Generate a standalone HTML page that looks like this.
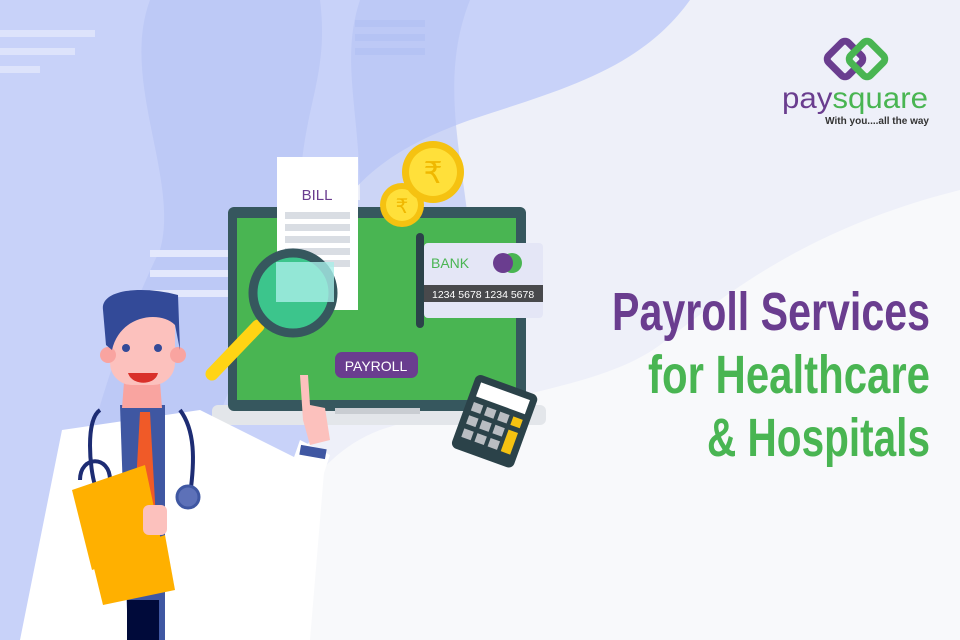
<!DOCTYPE html><html><head><style>body{margin:0}svg{display:block}</style></head><body>
<svg width="960" height="640" viewBox="0 0 960 640" xmlns="http://www.w3.org/2000/svg" font-family="Liberation Sans, sans-serif">
<rect width="960" height="640" fill="#eef0f9"/>
<path d="M960,190 C800,230 720,300 660,345 C600,390 470,400 380,430 C300,460 260,560 250,640 L960,640 Z" fill="#f8f9fb"/>
<path d="M690,0 C640,70 560,90 470,120 C400,145 370,170 345,200 L345,380 C330,440 250,480 200,640 L0,640 L0,0 Z" fill="#c8d2f9"/>
<path d="M150,0 L320,0 C330,80 300,110 300,200 L360,200 C360,110 340,60 360,0 L470,0 C430,100 480,200 470,300 L300,300 C250,330 200,400 180,640 L60,640 C60,500 120,330 160,250 C180,180 120,80 150,0Z" fill="#b5c3f4" opacity=".6"/>
<rect x="0" y="30" width="95" height="7" fill="#dde3fb"/><rect x="0" y="48" width="75" height="7" fill="#dde3fb"/><rect x="0" y="66" width="40" height="7" fill="#dde3fb"/>
<rect x="355" y="20" width="70" height="7" fill="#b5c3f4"/><rect x="355" y="34" width="70" height="7" fill="#b5c3f4"/><rect x="355" y="48" width="70" height="7" fill="#b5c3f4"/>
<rect x="150" y="250" width="100" height="7" fill="#e3e8fc"/><rect x="150" y="270" width="100" height="7" fill="#e3e8fc"/><rect x="150" y="290" width="90" height="7" fill="#e3e8fc"/>
<!-- laptop -->
<rect x="212" y="405" width="334" height="20" rx="6" fill="#e3e6ea"/>
<rect x="228" y="207" width="298" height="204" rx="6" fill="#36575e"/>
<rect x="237" y="218" width="279" height="182" fill="#49b552"/>
<rect x="335" y="408" width="85" height="6" fill="#c9cdd2"/>
<rect x="416" y="233" width="8" height="95" rx="4" fill="#2b4249"/>
<rect x="424" y="243" width="119" height="75" rx="4" fill="#e4e6f6"/>
<text x="431" y="268" font-size="14" fill="#49b552">BANK</text>
<circle cx="512" cy="263" r="10" fill="#49b552"/><circle cx="503" cy="263" r="10" fill="#6a3d8f"/>
<rect x="424" y="285" width="119" height="17" fill="#48494c"/>
<text x="432" y="298" font-size="10.5" fill="#fff">1234 5678 1234 5678</text>
<rect x="335" y="352" width="83" height="26" rx="7" fill="#6a3d8f"/>
<text x="376" y="371" font-size="14" fill="#fff" text-anchor="middle">PAYROLL</text>
<!-- bill -->
<path d="M277,157 L358,157 L358,310 L277,310 Z" fill="#fff"/>
<text x="317" y="200" font-size="15" fill="#6a3d8f" text-anchor="middle">BILL</text>
<g fill="#d9dde3"><rect x="285" y="212" width="65" height="7"/><rect x="285" y="224" width="65" height="7"/><rect x="285" y="236" width="65" height="7"/><rect x="285" y="248" width="65" height="7"/><rect x="285" y="260" width="65" height="7"/></g>
<!-- coins -->
<circle cx="402" cy="205" r="22" fill="#f5c211"/><circle cx="402" cy="205" r="16" fill="#ffe03a"/><text x="402" y="213" font-size="20" fill="#f0b800" text-anchor="middle">₹</text>
<circle cx="433" cy="172" r="31" fill="#f5c211"/><circle cx="433" cy="172" r="24" fill="#ffe03a"/><text x="433" y="183" font-size="30" fill="#f0b800" text-anchor="middle">₹</text>
<!-- magnifier -->
<line x1="258" y1="326" x2="212" y2="374" stroke="#ffd414" stroke-width="13" stroke-linecap="round"/>
<circle cx="293" cy="293" r="40" fill="#3cc58c" stroke="#36575e" stroke-width="9"/>
<rect x="276" y="262" width="58" height="40" fill="#a9efe8" opacity=".8"/>
<!-- calculator -->
<g transform="rotate(20 494 420)"><rect x="462" y="382" width="66" height="78" rx="6" fill="#2b4249"/><rect x="469" y="389" width="52" height="15" fill="#fff"/>
<g fill="#b9bdc2"><rect x="469" y="410" width="10" height="9"/><rect x="483" y="410" width="10" height="9"/><rect x="497" y="410" width="10" height="9"/><rect x="511" y="410" width="10" height="9" fill="#f5c211"/><rect x="469" y="424" width="10" height="9"/><rect x="483" y="424" width="10" height="9"/><rect x="497" y="424" width="10" height="9"/><rect x="511" y="424" width="10" height="23" fill="#f5c211"/><rect x="469" y="438" width="10" height="9"/><rect x="483" y="438" width="10" height="9"/><rect x="497" y="438" width="10" height="9"/></g></g>
<!-- doctor -->
<path d="M62,430 L200,410 L300,460 L325,460 L310,640 L20,640 Z" fill="#fff"/>
<path d="M300,440 L330,455 L295,560 L260,555 Z" fill="#fff"/>
<path d="M120,405 L165,405 L165,640 L128,640 Z" fill="#3f57a2"/>
<rect x="127" y="600" width="32" height="40" fill="#000a3a"/>
<path d="M140,412 L150,412 L156,520 L145,540 L134,520 Z" fill="#f05a28"/>
<path d="M100,410 C85,420 90,470 95,485" stroke="#1d2c73" stroke-width="4" fill="none"/>
<path d="M180,410 C195,430 195,460 190,495" stroke="#1d2c73" stroke-width="4" fill="none"/>
<circle cx="188" cy="497" r="11" fill="#5d71b8" stroke="#3f57a2" stroke-width="3"/>
<path d="M80,480 C80,455 110,455 110,480" stroke="#1d2c73" stroke-width="4" fill="none"/>
<path d="M124,382 L160,382 L162,408 L122,408 Z" fill="#f9a4a0"/>
<rect x="110" y="305" width="65" height="80" rx="22" fill="#fcc1bd"/>
<circle cx="108" cy="355" r="8" fill="#f9a4a0"/><circle cx="178" cy="355" r="8" fill="#f9a4a0"/>
<path d="M103,310 C100,290 140,285 178,295 L180,350 L175,325 C160,310 120,315 112,350 L106,345 Z" fill="#334a98"/>
<circle cx="126" cy="348" r="4" fill="#334a98"/><circle cx="158" cy="348" r="4" fill="#334a98"/>
<path d="M128,373 L158,373 C155,386 132,386 128,373Z" fill="#d9302a"/>
<path d="M72,490 L145,465 L162,545 L92,570 Z" fill="#ffb000"/>
<path d="M92,560 L165,535 L175,590 L103,605 Z" fill="#ffb000"/>
<rect x="143" y="505" width="24" height="30" rx="6" fill="#fcc1bd"/>
<path d="M300,375 L308,375 L310,405 L325,408 L330,440 L310,445 L303,420 Z" fill="#fcc1bd"/>
<rect x="300" y="447" width="26" height="10" fill="#3f57a2" transform="rotate(10 313 452)"/>
<!-- logo -->
<rect x="831" y="45" width="28" height="28" rx="5" transform="rotate(45 845 59)" fill="none" stroke="#6a3d8f" stroke-width="7"/>
<rect x="853" y="45" width="28" height="28" rx="5" transform="rotate(45 867 59)" fill="none" stroke="#49b552" stroke-width="7"/>
<text x="782" y="108" font-size="30" fill="#6a3d8f" textLength="146" lengthAdjust="spacingAndGlyphs"><tspan>pay</tspan><tspan fill="#49b552">square</tspan></text>
<text x="929" y="124" font-size="10" font-weight="bold" fill="#333" text-anchor="end">With you....all the way</text>
<g font-weight="bold" font-size="54">
<text x="612" y="330" fill="#6a3d8f" textLength="318" lengthAdjust="spacingAndGlyphs">Payroll Services</text>
<text x="648" y="393" fill="#49b552" textLength="282" lengthAdjust="spacingAndGlyphs">for Healthcare</text>
<text x="707" y="456" fill="#49b552" textLength="223" lengthAdjust="spacingAndGlyphs">&amp; Hospitals</text></g>
</svg></body></html>
